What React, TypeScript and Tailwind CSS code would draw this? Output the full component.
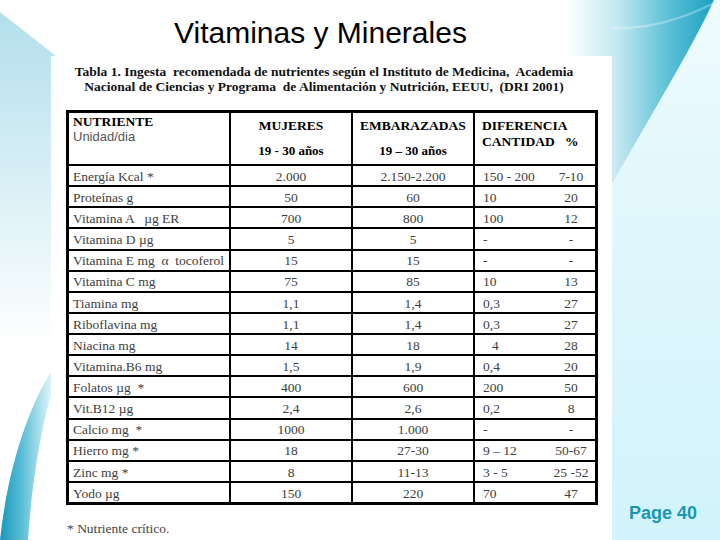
import React from "react";

// one row of the DRI table
interface Row {
  name: string;
  women: string;
  pregnant: string;
  diff: string;
  pct: string;
  indent?: boolean;
}

const rows: Row[] = [
  { name: "Energía Kcal *", women: "2.000", pregnant: "2.150-2.200", diff: "150 - 200", pct: "7-10" },
  { name: "Proteínas g", women: "50", pregnant: "60", diff: "10", pct: "20" },
  { name: "Vitamina A   µg ER", women: "700", pregnant: "800", diff: "100", pct: "12" },
  { name: "Vitamina D µg", women: "5", pregnant: "5", diff: "-", pct: "-" },
  { name: "Vitamina E mg  α  tocoferol", women: "15", pregnant: "15", diff: "-", pct: "-" },
  { name: "Vitamina C mg", women: "75", pregnant: "85", diff: "10", pct: "13" },
  { name: "Tiamina mg", women: "1,1", pregnant: "1,4", diff: "0,3", pct: "27" },
  { name: "Riboflavina mg", women: "1,1", pregnant: "1,4", diff: "0,3", pct: "27" },
  { name: "Niacina mg", women: "14", pregnant: "18", diff: "4", pct: "28", indent: true },
  { name: "Vitamina.B6 mg", women: "1,5", pregnant: "1,9", diff: "0,4", pct: "20" },
  { name: "Folatos µg  *", women: "400", pregnant: "600", diff: "200", pct: "50" },
  { name: "Vit.B12 µg", women: "2,4", pregnant: "2,6", diff: "0,2", pct: "8" },
  { name: "Calcio mg  *", women: "1000", pregnant: "1.000", diff: "-", pct: "-" },
  { name: "Hierro mg *", women: "18", pregnant: "27-30", diff: "9 – 12", pct: "50-67" },
  { name: "Zinc mg *", women: "8", pregnant: "11-13", diff: "3 - 5", pct: "25 -52" },
  { name: "Yodo µg", women: "150", pregnant: "220", diff: "70", pct: "47" },
];

const cell = "bg-white flex items-center pt-[2px] leading-none text-[13.5px] text-[#404040]";

function Background() {
  return (
    <svg className="absolute inset-0" width="720" height="540">
      <defs>
        <linearGradient id="leftFade" x1="0" y1="0" x2="0" y2="1">
          <stop offset="0" stopColor="#b3dfec" />
          <stop offset="0.55" stopColor="#dcf1f7" />
          <stop offset="1" stopColor="#ffffff" />
        </linearGradient>
        <linearGradient id="rightBg" x1="0" y1="0" x2="0" y2="1">
          <stop offset="0" stopColor="#f0fbfe" />
          <stop offset="0.4" stopColor="#e0f7fc" />
          <stop offset="1" stopColor="#d2f3fb" />
        </linearGradient>
        <linearGradient id="swooshTR" gradientUnits="userSpaceOnUse" x1="566" y1="0" x2="712" y2="0">
          <stop offset="0" stopColor="#ffffff" />
          <stop offset="0.35" stopColor="#c4e8f1" />
          <stop offset="0.7" stopColor="#5cc0d7" />
          <stop offset="1" stopColor="#1ea2c2" />
        </linearGradient>
        <linearGradient id="swooshBL" gradientUnits="userSpaceOnUse" x1="0" y1="0" x2="51" y2="0">
          <stop offset="0" stopColor="#1898b9" />
          <stop offset="0.45" stopColor="#5fc0d8" />
          <stop offset="1" stopColor="#dff4fa" />
        </linearGradient>
      </defs>
      <path d="M0,12 L56,56 L51,56 L51,345 L0,345 Z" fill="url(#leftFade)" />
      <rect x="612" y="0" width="108" height="540" fill="url(#rightBg)" />
      <path d="M560,0 L714,0 C692,48 656,106 612,184 L612,56 L560,56 Z" fill="url(#swooshTR)" />
      <path d="M612,28 Q660,30 712,4" fill="none" stroke="#ffffff" strokeOpacity="0.3" strokeWidth="2" />
      <path d="M51,372 C30,405 8,465 0,540 L28,540 C32,480 42,425 51,396 Z" fill="url(#swooshBL)" />
    </svg>
  );
}

export default function App() {
  return (
    <div className="relative w-[720px] h-[540px] overflow-hidden bg-white">
      <Background />

      <div className="relative flex flex-col h-full">
        {/* Title */}
        <div className="h-[56px] pt-[16px] pl-[174px]">
          <h1 className="font-['Liberation_Sans',Arial,sans-serif] text-[30px] leading-[34px] text-black">
            Vitaminas y Minerales
          </h1>
        </div>

        <div className="flex flex-1">
          <div className="w-[51px]" />

          {/* Table sheet */}
          <div className="w-[561px] bg-white font-['Liberation_Serif','Times_New_Roman',serif]">
            <div className="pt-[8px] pr-[15px] text-center font-bold text-[13.5px] leading-[15px] text-[#111] whitespace-pre">
              <p>Tabla 1. Ingesta  recomendada de nutrientes según el Instituto de Medicina,  Academia</p>
              <p>Nacional de Ciencias y Programa  de Alimentación y Nutrición, EEUU,  (DRI 2001)</p>
            </div>

            <div className="ml-[15px] mt-[16px] w-[532px] border-[3px] border-black bg-black grid grid-cols-[160px_120px_120px_120px] grid-rows-[51px_repeat(16,19.125px)] gap-[2px]">
              {/* Header */}
              <div className="bg-white pl-[4px] pt-[1px]">
                <p className="font-bold text-[13.5px] leading-[15px] text-black">NUTRIENTE</p>
                <p className="font-['Liberation_Sans',Arial,sans-serif] text-[13px] leading-[15px] text-[#555]">
                  Unidad/dia
                </p>
              </div>
              <div className="bg-white flex flex-col items-center pt-[5px] font-bold text-black">
                <p className="text-[13.5px] leading-[15px]">MUJERES</p>
                <p className="mt-[10px] text-[13px] leading-[15px]">19 - 30 años</p>
              </div>
              <div className="bg-white flex flex-col items-center pt-[5px] font-bold text-black">
                <p className="text-[13.5px] leading-[15px]">EMBARAZADAS</p>
                <p className="mt-[10px] text-[13px] leading-[15px]">19 – 30 años</p>
              </div>
              <div className="bg-white pl-[7px] pt-[5px] font-bold text-black text-[13.5px] leading-[16px] whitespace-pre">
                <p>DIFERENCIA</p>
                <p>CANTIDAD   %</p>
              </div>

              {/* Data rows */}
              {rows.map((r) => (
                <React.Fragment key={r.name}>
                  <div className={`${cell} pl-[4px] whitespace-pre`}>{r.name}</div>
                  <div className={`${cell} justify-center`}>{r.women}</div>
                  <div className={`${cell} justify-center`}>{r.pregnant}</div>
                  <div className={`${cell} justify-between`}>
                    <span className={r.indent ? "pl-[17px]" : "pl-[8px]"}>{r.diff}</span>
                    <span className="w-[48px] text-center">{r.pct}</span>
                  </div>
                </React.Fragment>
              ))}
            </div>

            <p className="ml-[16px] mt-[16px] text-[13.5px] leading-[15px] text-[#444]">* Nutriente crítico.</p>
          </div>

          {/* Right strip */}
          <div className="flex-1 flex flex-col justify-end pb-[17px] pl-[17px]">
            <p className="font-['Liberation_Sans',Arial,sans-serif] font-bold text-[18px] leading-[20px] text-[#1996b2]">
              Page 40
            </p>
          </div>
        </div>
      </div>
    </div>
  );
}
